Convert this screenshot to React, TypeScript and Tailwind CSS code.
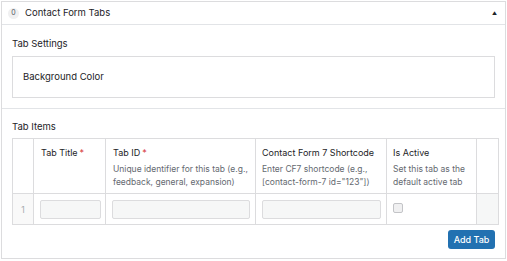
import React from 'react';

const font = { fontFamily: 'Inter, "Noto Sans", sans-serif' };

function Required() {
  return <span className="ml-[2px] text-[#d63638]">*</span>;
}

export default function App() {
  return (
    <div className="h-[261px] w-[507px] bg-white p-px" style={font}>
      <div className="flex h-[258px] w-[505px] flex-col border border-[#dcdcde] bg-white text-[#1d2327]">
        {/* header */}
        <div className="flex h-[23px] shrink-0 items-center border-b border-[#e2e4e7] pl-[6px] pr-[8px]">
          <span className="flex h-[11px] w-[11px] items-center justify-center rounded-full bg-[#f0f0f1] text-[7px] text-[#50575e]">
            0
          </span>
          <span className="ml-[6px] text-[9.5px]">Contact Form Tabs</span>
          <span className="ml-auto text-[5px] leading-none text-[#1d2327]">▲</span>
        </div>

        {/* tab settings */}
        <div className="border-b border-[#e2e4e7] px-[10px] pb-[10px] pt-[12px]">
          <div className="text-[9.5px] leading-[14px]">Tab Settings</div>
          <div className="mt-[5px] flex h-[42px] items-center border border-[#dcdcde] px-[10px] text-[9.5px]">
            Background Color
          </div>
        </div>

        {/* tab items */}
        <div className="flex flex-col px-[10px] pt-[11px]">
          <div className="text-[9.5px] leading-[14px]">Tab Items</div>
          <table className="mt-[4px] w-[486px] table-fixed border-collapse border border-[#dcdcde]">
            <colgroup>
              <col className="w-[21px]" />
              <col className="w-[72px]" />
              <col className="w-[150px]" />
              <col className="w-[131px]" />
              <col className="w-[90px]" />
              <col className="w-[22px]" />
            </colgroup>
            <thead>
              <tr className="h-[55px] border-b border-[#dcdcde] align-top">
                <th className="border-r border-[#dcdcde]" />
                <th className="border-r border-[#dcdcde] px-[7px] pt-[7px] text-left text-[9px] font-normal leading-[14px]">
                  Tab Title
                  <Required />
                </th>
                <th className="border-r border-[#dcdcde] px-[7px] pt-[7px] text-left font-normal">
                  <div className="text-[9px] leading-[14px]">
                    Tab ID
                    <Required />
                  </div>
                  <div className="mt-[3px] text-[8.5px] leading-[12.5px] text-[#646970]">
                    Unique identifier for this tab (e.g., feedback, general, expansion)
                  </div>
                </th>
                <th className="border-r border-[#dcdcde] px-[6px] pt-[7px] text-left font-normal">
                  <div className="text-[9px] leading-[14px]">Contact Form 7 Shortcode</div>
                  <div className="mt-[3px] text-[8.5px] leading-[12.5px] text-[#646970]">
                    Enter CF7 shortcode (e.g., [contact-form-7 id="123"])
                  </div>
                </th>
                <th className="border-r border-[#dcdcde] px-[6px] pt-[7px] text-left font-normal">
                  <div className="text-[9px] leading-[14px]">Is Active</div>
                  <div className="mt-[3px] text-[8.5px] leading-[12.5px] text-[#646970]">
                    Set this tab as the default active tab
                  </div>
                </th>
                <th />
              </tr>
            </thead>
            <tbody>
              <tr className="h-[31px] align-top">
                <td className="border-r border-[#dcdcde] bg-[#f9f9f9] pt-[10px] text-center text-[8.5px] text-[#a7aaad]">
                  1
                </td>
                <td className="border-r border-[#dcdcde] pl-[6px] pr-[4px] pt-[6px]">
                  <div className="h-[19px] rounded-[2px] border border-[#dcdcde] bg-[#f6f7f7]" />
                </td>
                <td className="border-r border-[#dcdcde] pl-[6px] pr-[5px] pt-[6px]">
                  <div className="h-[19px] rounded-[2px] border border-[#dcdcde] bg-[#f6f7f7]" />
                </td>
                <td className="border-r border-[#dcdcde] pl-[6px] pr-[5px] pt-[6px]">
                  <div className="h-[19px] rounded-[2px] border border-[#dcdcde] bg-[#f6f7f7]" />
                </td>
                <td className="border-r border-[#dcdcde] pl-[6px] pt-[9px]">
                  <div className="h-[10px] w-[10px] rounded-[2px] border border-[#c3c4c7] bg-[#f0f0f1]" />
                </td>
                <td className="bg-[#f6f7f7]" />
              </tr>
            </tbody>
          </table>
          <div className="mt-[5px] flex justify-end">
            <button className="h-[19px] w-[47px] rounded-[3px] bg-[#2271b1] text-[9px] font-medium text-white">
              Add Tab
            </button>
          </div>
        </div>
      </div>
    </div>
  );
}
